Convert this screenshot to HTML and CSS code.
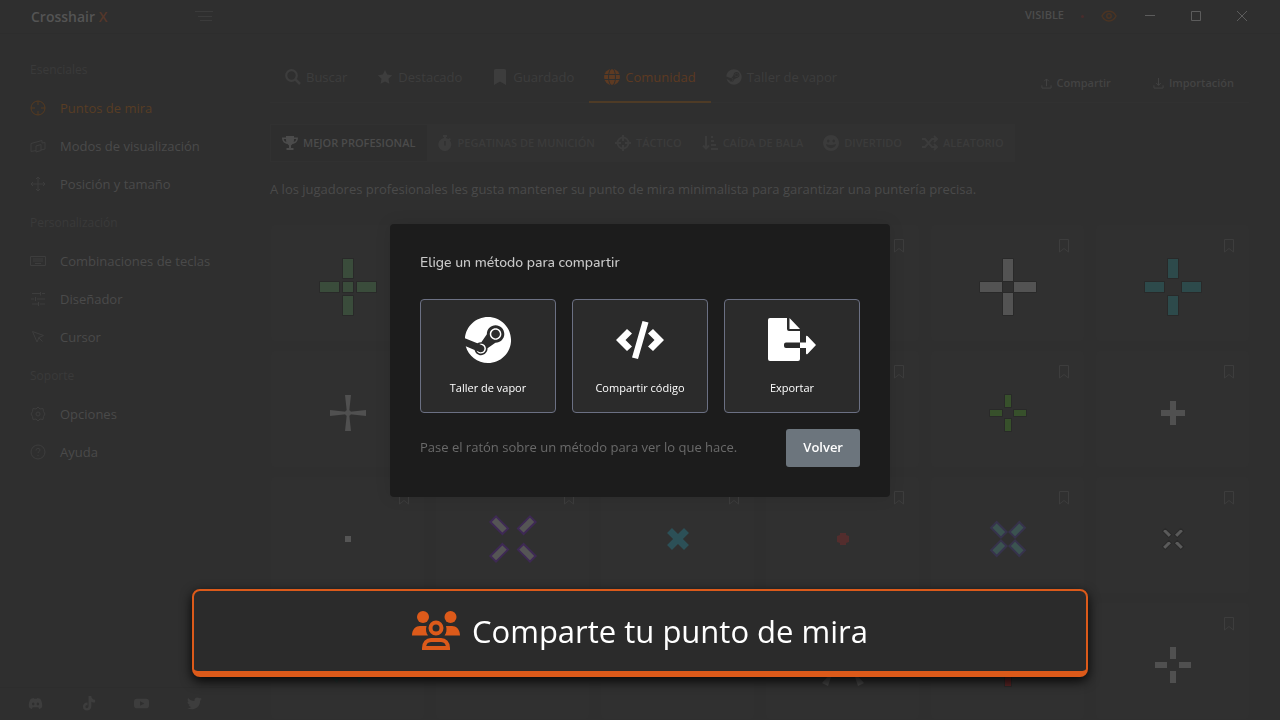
FILE: index.html
```html
<!DOCTYPE html>
<html lang="es">
<head>
    <meta charset="UTF-8">
    <meta name="viewport" content="width=device-width, initial-scale=1.0">
    <title>Crosshair X</title>
    <link rel="stylesheet" href="styles.css">
</head>
<body>
    <!-- shared icons -->
    <svg width="0" height="0" class="defs">
        <symbol id="i-bookmark" viewBox="0 0 10 14"><path d="M.5.5h9V13L5 9.5.5 13z" fill="none" stroke="currentColor"/></symbol>
        <symbol id="i-steam" viewBox="-10 -2 516 516"><path fill="currentColor" d="M496 256c0 137-111.2 248-248.4 248-113.8 0-209.6-76.3-239-180.4l95.2 39.3c6.4 32.1 34.9 56.4 68.9 56.4 39.2 0 71.9-32.4 70.2-73.5l84.5-60.2c52.1 1.3 95.8-40.9 95.8-93.5 0-51.6-42-93.5-93.7-93.5s-93.7 42-93.7 93.5v1.2L176.6 279c-15.5-.9-30.7 3.4-43.5 12.1L0 236.1C10.2 108.4 117.1 8 247.6 8 384.8 8 496 119 496 256zM155.7 384.3l-30.5-12.6a52.8 52.8 0 0 0 27.2 25.8c26.9 11.2 57.8-1.6 69-28.4 5.4-13 5.5-27.3.1-40.3-5.4-13-15.5-23.2-28.5-28.6-12.9-5.4-26.7-5.2-38.9-.6l31.5 13c19.8 8.2 29.2 30.9 20.9 50.7-8.3 19.9-31 29.2-50.8 21zm173.8-129.9c-34.4 0-62.4-28-62.4-62.3s28-62.3 62.4-62.3 62.4 28 62.4 62.3-27.9 62.3-62.4 62.3zm.1-15.6c25.9 0 46.9-21 46.9-46.8 0-25.9-21-46.8-46.9-46.8s-46.9 21-46.9 46.8c.1 25.8 21.1 46.8 46.9 46.8z"/></symbol>
    </svg>

    <div class="app">
        <header class="titlebar">
            <div class="logo">Crosshair <span>X</span></div>
            <button class="burger" aria-label="Menú">
                <svg width="18" height="11" viewBox="0 0 18 11" stroke="currentColor"><path d="M0 .5h18M3 5.5h14M5 9.5h12"/></svg>
            </button>
            <div class="window-tools">
                <span class="visible-label">VISIBLE</span>
                <span class="preview"></span>
                <button class="eye" aria-label="Mostrar">
                    <svg width="16" height="12" viewBox="0 0 16 12" fill="none" stroke="currentColor" stroke-width="1.5"><path d="M1 6c3-6.500 11-6.500 14 0-3 6.500-11 6.500-14 0z"/><circle cx="8" cy="6" r="2.2"/></svg>
                </button>
                <button class="win" aria-label="Minimizar"><svg width="10" height="10" stroke="currentColor"><path d="M0 4.500h10"/></svg></button>
                <button class="win" aria-label="Maximizar"><svg width="10" height="10" fill="none" stroke="currentColor"><path d="M.5.5h9v9h-9z"/></svg></button>
                <button class="win" aria-label="Cerrar"><svg width="10" height="10" stroke="currentColor"><path d="M0 0l10 10M10 0L0 10"/></svg></button>
            </div>
        </header>

        <aside class="sidebar">
            <nav>
                <h2>Esenciales</h2>
                <a href="#" class="active"><svg viewBox="0 0 16 16"><circle cx="8" cy="8" r="7"/><path d="M8 1v4M8 11v4M1 8h4M11 8h4"/></svg>Puntos de mira</a>
                <a href="#"><svg viewBox="0 0 16 16"><path d="M6 12.500l-5 1v-8l11-3V5M6 8l5-1.500v6L6 14zM12 5l3-.5V11l-4 1"/></svg>Modos de visualización</a>
                <a href="#"><svg viewBox="0 0 16 16"><path d="M8 1v14M1 8h14M6 3l2-2 2 2M6 13l2 2 2-2M3 6L1 8l2 2M13 6l2 2-2 2"/></svg>Posición y tamaño</a>
                <h2>Personalización</h2>
                <a href="#"><svg viewBox="0 0 16 16"><path d="M.5 3.500h15v9H.5zM3 6h10M3 8h10M5 10.500h6"/></svg>Combinaciones de teclas</a>
                <a href="#"><svg viewBox="0 0 16 16"><path d="M2 2.500h8M12 2.500h3M10.500 1v3.500M1 8h3M7 8h8M5.500 6v4M2 13h6M10 13h5M8.500 11v4"/></svg>Diseñador</a>
                <a href="#"><svg viewBox="0 0 16 16"><path d="M2.500 2.500l11 4-4.500 2-2 4.500zM8.500 8.500l4 4"/></svg>Cursor</a>
                <h2>Soporte</h2>
                <a href="#"><svg viewBox="0 0 16 16"><path d="M8 1l2 2 3-.5.500 3L15 8l-1.500 2.500-.5 3-3-.5-2 2-2-2-3 .5-.5-3L1 8l1.500-2.500.500-3L6 3z"/><circle cx="8" cy="8" r="2"/></svg>Opciones</a>
                <a href="#"><svg viewBox="0 0 16 16"><circle cx="8" cy="8" r="7"/><path d="M6 6.500c0-3 4-2.500 4-.5 0 1.500-2 1.500-2 3M8 11v1"/></svg>Ayuda</a>
            </nav>
            <footer class="social">
                <a href="#" aria-label="Discord"><svg viewBox="0 0 16 16"><path fill-rule="evenodd" d="M3 3l3-1 .5 1h3l.5-1 3 1c2 3 2.500 6 2 9l-3 2-1-2H5l-1 2-3-2c-.5-3 0-6 2-9zm2.500 4a1.300 1.500 0 1 0 .1 0zm5 0a1.300 1.500 0 1 0 .1 0z"/></svg></a>
                <a href="#" aria-label="TikTok"><svg viewBox="0 0 16 16"><path d="M8 0h3c0 2 1.500 4 4 4v3c-1.500 0-3-.5-4-1v5c0 6-9 6-9 .5C2 8.500 4.500 6.500 7 7v3c-1-.4-2.300 0-2.300 1.500C4.700 13.500 8 13.500 8 11z"/></svg></a>
                <a href="#" aria-label="YouTube"><svg viewBox="0 0 16 16"><path fill-rule="evenodd" d="M3 3h10q3 0 3 3v4q0 3-3 3H3q-3 0-3-3V6q0-3 3-3zm3.500 2.500v5L11 8z"/></svg></a>
                <a href="#" aria-label="Twitter"><svg viewBox="0 0 16 16"><path d="M16 3l-2 2c0 8-8 11-14 8 2 0 3.500-.5 4.500-1.400C3 11.500 2 10.500 1.600 9.300H3C1.500 8.800.5 7.500.5 6l1.500.4C.5 5.200.3 3.400 1.100 2 3 4 5 5 8 5.200 7.500 3 9 1.500 11 1.500c1 0 1.800.4 2.400 1L15.500 2l-1.300 1.700z"/></svg></a>
            </footer>
        </aside>

        <main class="content">
            <div class="topbar">
                <nav class="tabs">
                    <a href="#"><svg viewBox="0 0 16 16"><circle cx="6.500" cy="6.500" r="5.300" fill="none" stroke="currentColor" stroke-width="2.200"/><path d="M10 10l5 5" stroke="currentColor" stroke-width="2.500"/></svg>Buscar</a>
                    <a href="#"><svg viewBox="0 0 16 16"><path d="M8 1l2.200 4.600 5 .7-3.700 3.500.9 5L8 12.400l-4.400 2.400.9-5L.8 6.300l5-.7z"/></svg>Destacado</a>
                    <a href="#"><svg viewBox="0 0 16 16"><path d="M3.500 0h9q1.500 0 1.500 1.500V16l-6-3.500L2 16V1.500Q2 0 3.500 0z"/></svg>Guardado</a>
                    <a href="#" class="active"><svg viewBox="0 0 16 16"><circle cx="8" cy="8" r="8"/><g class="cut"><ellipse cx="8" cy="8" rx="3.500" ry="8.500"/><path d="M0 5.500h16M0 10.500h16"/></g></svg>Comunidad</a>
                    <a href="#"><svg><use href="#i-steam"/></svg>Taller de vapor</a>
                </nav>
                <div class="actions">
                    <button><svg viewBox="0 0 12 12"><path d="M1 8v3h10V8M6 9V1M3.500 3.500L6 1l2.500 2.500"/></svg>Compartir</button>
                    <button><svg viewBox="0 0 12 12"><path d="M1 8v3h10V8M6 0v8M3.500 5.500L6 8l2.500-2.500"/></svg>Importación</button>
                </div>
            </div>

            <div class="filters">
                <button class="active"><svg viewBox="0 0 16 16"><path fill-rule="evenodd" d="M4 1h8v1.500h4C16 6 14 8.500 10.500 9L9 10.500V13h2.500v2h-7v-2H7v-2.500L5.500 9C2 8.500 0 6 0 2.500h4zM1.700 4c.2 1.500 1.200 2.500 2.600 3C4 6 4 5 4 4zm12.600 0H12c0 1 0 2-.3 3 1.400-.5 2.400-1.500 2.600-3z"/></svg>MEJOR PROFESIONAL</button>
                <button><svg viewBox="0 0 16 16"><path fill-rule="evenodd" d="M6 0h4v2H9v1.100l2.500 1L12.800 3l1.200 1.200-1.100 1.300A6.500 6.500 0 1 1 7 3.100V2H6zm1.200 6v4.500h1.600V6z"/></svg>PEGATINAS DE MUNICIÓN</button>
                <button><svg viewBox="0 0 16 16" fill="none" stroke="currentColor" stroke-width="2"><circle cx="8" cy="8" r="5.500"/><path d="M8 0v6M8 10v6M0 8h6M10 8h6"/></svg>TÁCTICO</button>
                <button><svg viewBox="0 0 16 16" fill="none" stroke="currentColor" stroke-width="2"><path d="M4 1v12M1 10.500l3 3 3-3M9 2h2M9 6h3M9 10h5M9 14h7"/></svg>CAÍDA DE BALA</button>
                <button><svg viewBox="0 0 16 16"><path fill-rule="evenodd" d="M8 0a8 8 0 1 0 .01 0zM5.300 4.500a1.200 1.500 0 1 1-.1 0zm5.500 0a1.200 1.500 0 1 1-.1 0zM3 9c3 1.300 7 1.300 10 0-.5 5.500-9.500 5.500-10 0z"/></svg>DIVERTIDO</button>
                <button><svg viewBox="0 0 16 16" fill="none" stroke="currentColor" stroke-width="2"><path d="M0 4h3l7 8h5M0 12h3l7-8h5M12 1l3 3-3 3M12 9l3 3-3 3"/></svg>ALEATORIO</button>
            </div>

            <p class="description">A los jugadores profesionales les gusta mantener su punto de mira minimalista para garantizar una puntería precisa.</p>

            <div class="grid">
                <div class="card"><button aria-label="Guardar"><svg><use href="#i-bookmark"/></svg></button>
                    <svg class="cross" viewBox="-32 -32 64 64" fill="#3a4c3b" stroke="#292929"><path d="M-5.500-28.500h11v20h-11zM-5.500 8.500h11v20h-11zM-28.500-5.500h20v11h-20zM8.500-5.500h20v11h-20zM-5.500-5.500h11v11h-11z"/></svg></div>
                <div class="card"><button aria-label="Guardar"><svg><use href="#i-bookmark"/></svg></button></div>
                <div class="card"><button aria-label="Guardar"><svg><use href="#i-bookmark"/></svg></button></div>
                <div class="card"><button aria-label="Guardar"><svg><use href="#i-bookmark"/></svg></button></div>
                <div class="card"><button aria-label="Guardar"><svg><use href="#i-bookmark"/></svg></button>
                    <svg class="cross" viewBox="-32 -32 64 64" fill="#535353" stroke="#292929"><path d="M-5.500-28.500h11v23h-11zM-5.500 5.500h11v23h-11zM-28.500-5.500h23v11h-23zM5.500-5.500h23v11h-23z"/></svg></div>
                <div class="card"><button aria-label="Guardar"><svg><use href="#i-bookmark"/></svg></button>
                    <svg class="cross" viewBox="-32 -32 64 64" fill="#2d4a4b" stroke="#292929"><path d="M-5.500-28.500h11v20h-11zM-5.500 8.500h11v20h-11zM-28.500-5.500h20v11h-20zM8.500-5.500h20v11h-20z"/></svg></div>

                <div class="card"><button aria-label="Guardar"><svg><use href="#i-bookmark"/></svg></button>
                    <svg class="cross" viewBox="-32 -32 64 64" fill="#505050"><path d="M-3-18h6L1 0l2 18h-6L-1 0zM-18-3v6L0 1l18 2v-6L0-1z"/><circle r="3"/></svg></div>
                <div class="card"><button aria-label="Guardar"><svg><use href="#i-bookmark"/></svg></button></div>
                <div class="card"><button aria-label="Guardar"><svg><use href="#i-bookmark"/></svg></button></div>
                <div class="card"><button aria-label="Guardar"><svg><use href="#i-bookmark"/></svg></button></div>
                <div class="card"><button aria-label="Guardar"><svg><use href="#i-bookmark"/></svg></button>
                    <svg class="cross" viewBox="-32 -32 64 64" fill="#37502b" stroke="#292929"><path d="M-3.500-18.500h7v13h-7zM-3.500 5.500h7v13h-7zM-18.500-3.500h13v7h-13zM5.500-3.500h13v7h-13z"/></svg></div>
                <div class="card"><button aria-label="Guardar"><svg><use href="#i-bookmark"/></svg></button>
                    <svg class="cross" viewBox="-32 -32 64 64" fill="#505050"><path d="M-3-12h6v9h9v6H3v9h-6V3h-9v-6h9z"/></svg></div>

                <div class="card"><button aria-label="Guardar"><svg><use href="#i-bookmark"/></svg></button>
                    <svg class="cross" viewBox="-32 -32 64 64" fill="#555"><path d="M-3-3h6v6h-6z"/></svg></div>
                <div class="card"><button aria-label="Guardar"><svg><use href="#i-bookmark"/></svg></button>
                    <svg class="cross" viewBox="-32 -32 64 64" fill="#555" stroke="#3e2954" stroke-width="2"><path transform="rotate(45)" d="M-4-28h8v17h-8zM-4 11h8v17h-8zM-28-4h17v8h-17zM11-4h17v8H11z"/></svg></div>
                <div class="card"><button aria-label="Guardar"><svg><use href="#i-bookmark"/></svg></button>
                    <svg class="cross" viewBox="-32 -32 64 64" fill="#2c5057"><path transform="rotate(45)" d="M-3.500-12h7v8.500H12v7H3.500V12h-7V3.500H-12v-7h8.500z"/></svg></div>
                <div class="card"><button aria-label="Guardar"><svg><use href="#i-bookmark"/></svg></button>
                    <svg class="cross" viewBox="-32 -32 64 64" fill="#532d2d"><path d="M-3-6h6v2l3 1v6L3 4v2h-6V4l-3-1v-6l3-1z"/></svg></div>
                <div class="card"><button aria-label="Guardar"><svg><use href="#i-bookmark"/></svg></button>
                    <svg class="cross" viewBox="-32 -32 64 64" fill="#3b5350" stroke="#37334c" stroke-width="2"><path transform="rotate(45)" d="M-4-20h8v14h-8zM-4 6h8v14h-8zM-20-4h14v8h-14zM6-4h14v8H6z"/></svg></div>
                <div class="card"><button aria-label="Guardar"><svg><use href="#i-bookmark"/></svg></button>
                    <svg class="cross" viewBox="-32 -32 64 64" fill="#5a5a5a" stroke="#292929"><path transform="rotate(45)" d="M-2-13h4v9h-4zM-2 4h4v9h-4zM-13-2h9v4h-9zM4-2h9v4H4z"/></svg></div>

                <div class="card"><button aria-label="Guardar"><svg><use href="#i-bookmark"/></svg></button>
                    <svg class="cross" viewBox="-32 -32 64 64" fill="#263532"><path d="M-14 5l5 8-2 5-5-5zM14 5l-5 8 2 5 5-5z"/></svg></div>
                <div class="card"><button aria-label="Guardar"><svg><use href="#i-bookmark"/></svg></button></div>
                <div class="card"><button aria-label="Guardar"><svg><use href="#i-bookmark"/></svg></button></div>
                <div class="card"><button aria-label="Guardar"><svg><use href="#i-bookmark"/></svg></button>
                    <svg class="cross" viewBox="-32 -32 64 64" fill="#464646"><path d="M-12 8l-9 10 6 3 3-9zM12 8l9 10-6 3-3-9z"/></svg></div>
                <div class="card"><button aria-label="Guardar"><svg><use href="#i-bookmark"/></svg></button>
                    <svg class="cross" viewBox="-32 -32 64 64" fill="#572323" stroke="#292929"><path d="M-3.500 8.500h7v13h-7z"/></svg></div>
                <div class="card"><button aria-label="Guardar"><svg><use href="#i-bookmark"/></svg></button>
                    <svg class="cross" viewBox="-32 -32 64 64" fill="#505050"><path d="M-3-18h6v12h-6zM-3 6h6v12h-6zM-18-3h12v6h-12zM6-3h12v6H6z"/></svg></div>
            </div>
        </main>
    </div>

    <div class="overlay">
        <div class="modal" role="dialog" aria-labelledby="modal-title">
            <h1 id="modal-title">Elige un método para compartir</h1>
            <div class="methods">
                <button><svg><use href="#i-steam"/></svg>Taller de vapor</button>
                <button><svg viewBox="0 -5 48 48"><path d="M0 19L11 8l5 4.500L9.500 19l6.500 6.500-5 4.500zM48 19L37 8l-5 4.500 6.500 6.500-6.500 6.500 5 4.500zM26.500 0l6 1.500L22 38l-6-1.500z"/></svg>Compartir código</button>
                <button><svg viewBox="0 -2 48 48"><path d="M2 0h17v11q0 2 2 2h11v11.500H18q-2 0-2 2V28q0 2 2 2h14v11q0 2-2 2H2q-2 0-2-2V2q0-2 2-2zM21.500 0L32 11H21.500zM32 24.500h6V19q0-2 1.500-1L48 27l-8.500 9q-1.500 1-1.500-1v-5h-6z"/></svg>Exportar</button>
            </div>
            <div class="modal-footer">
                <p>Pase el ratón sobre un método para ver lo que hace.</p>
                <button>Volver</button>
            </div>
        </div>
    </div>

    <div class="banner">
        <svg viewBox="0 0 48 40"><circle cx="11" cy="6" r="6"/><circle cx="38.500" cy="6" r="6"/><path d="M0 24.500C0 18 4 15 8 15h6.500c-1 3.500-.5 7 1.500 9.500zM48 24.500C48 18 44 15 40 15h-6c1 3.500.500 7-1.500 9.500z"/><g fill="none" stroke="currentColor" stroke-width="4"><circle cx="24" cy="17" r="5.500"/><path d="M12 37c0-5 3-8 7-8h10c4 0 7 3 7 8z"/></g></svg>
        <span>Comparte tu punto de mira</span>
    </div>
</body>
</html>
```

FILE: styles.css
```css
* {
    box-sizing: border-box;
}
body {
    margin: 0;
    height: 100vh;
    overflow: hidden;
    font-family: "Open Sans", sans-serif;
    font-size: 13px;
    line-height: 18px;
    color: #4a4a4a;
    fill: currentColor;
    background-color: #2f2f2f;
}
h1, h2, p {
    margin: 0;
}
a {
    color: inherit;
    text-decoration: none;
}
button {
    padding: 0;
    border: none;
    background: none;
    color: inherit;
    font: inherit;
    cursor: pointer;
}
svg {
    display: block;
    flex: none;
}
.defs {
    position: absolute;
}
.app {
    display: grid;
    grid-template: 34px 1fr / 240px 1fr;
    height: 100vh;
}

/* title bar */
.titlebar {
    grid-column: 1 / 3;
    display: flex;
    align-items: center;
    padding: 0 15px 0 31px;
    border-bottom: 1px solid #2d2d2d;
}
.logo {
    width: 164px;
    font-size: 14px;
    font-weight: 600;
    color: #545454;
}
.logo span {
    color: #55372a;
}
.burger {
    color: #3b3b3b;
}
.window-tools {
    display: flex;
    align-items: center;
    align-self: flex-start;
    height: 32px;
    margin-left: auto;
    color: #5c5c5c;
}
.visible-label {
    padding-bottom: 2px;
    font-size: 11px;
    font-weight: 600;
    color: #4c4c4c;
}
.preview {
    width: 3px;
    height: 3px;
    margin: 0 17px;
    border-radius: 2px;
    background-color: #492c2c;
}
.eye {
    margin-right: 10px;
    color: #4b3423;
}
.win {
    display: flex;
    align-items: center;
    justify-content: center;
    width: 46px;
    height: 32px;
}

/* sidebar */
.sidebar {
    display: flex;
    flex-direction: column;
    padding-top: 17px;
    white-space: nowrap;
}
.sidebar h2 {
    padding: 10px 30px;
    font-size: 12px;
    font-weight: 400;
    color: #3a3a3a;
}
.sidebar nav a {
    display: flex;
    align-items: center;
    gap: 14px;
    height: 38px;
    padding: 0 30px;
}
.sidebar nav a + h2 {
    margin-top: 1px;
}
.sidebar nav a.active {
    color: #583d24;
}
.sidebar nav svg {
    width: 16px;
    height: 16px;
    fill: none;
    stroke: #3d3d3d;
}
.sidebar nav .active svg {
    stroke: #553a20;
}
.social {
    display: flex;
    gap: 38px;
    margin-top: auto;
    padding: 8px 28px 9px;
    border-top: 1px solid #2d2d2d;
    color: #3d3d3d;
}
.social svg {
    width: 15px;
    height: 15px;
}

/* main area */
.content {
    padding: 19px 31px 0 30px;
    overflow: hidden;
}
.topbar {
    display: flex;
    justify-content: space-between;
    border-bottom: 1px solid #313131;
}
.tabs {
    display: flex;
    color: #3d3d3d;
}
.tabs a {
    display: flex;
    align-items: center;
    gap: 5px;
    height: 50px;
    margin-bottom: -1px;
    padding: 0 15px;
    border-bottom: 2px solid transparent;
}
.tabs a.active {
    color: #5d3a22;
    border-color: #4e3b26;
}
.tabs svg,
.filters svg {
    width: 16px;
    height: 16px;
}
.cut {
    fill: none;
    stroke: #2f2f2f;
}
.actions {
    display: flex;
    gap: 12px;
    padding-top: 11px;
}
.actions button {
    display: flex;
    align-items: center;
    gap: 5px;
    height: 38px;
    padding: 0 15px;
    font-size: 11px;
    font-weight: 600;
    color: #434343;
}
.actions svg {
    width: 11px;
    height: 11px;
    fill: none;
    stroke: currentColor;
}
.filters {
    display: flex;
    width: fit-content;
    margin-top: 21px;
    border: 1px solid #313131;
    background-color: #313131;
}
.filters button {
    display: flex;
    align-items: center;
    gap: 5px;
    height: 36px;
    padding: 0 10px;
    font-size: 11px;
    font-weight: 600;
    color: #3b3b3b;
}
.filters button.active {
    padding: 0 11px;
    color: #4b4b4b;
    background-color: #2e2e2e;
}
.description {
    margin: 18px 0 27px;
}
.grid {
    display: grid;
    grid-template-columns: repeat(6, 1fr);
    gap: 10px 12px;
    padding-left: 1px;
}
.card {
    position: relative;
    display: flex;
    justify-content: center;
    height: 116px;
    padding-top: 30px;
    border-radius: 4px;
    background-color: #303030;
}
.card button {
    position: absolute;
    top: 14px;
    right: 15px;
    color: #3d3d3d;
}
.card button svg {
    width: 10px;
    height: 14px;
}
.cross {
    width: 64px;
    height: 64px;
}

/* share dialog */
.overlay {
    position: fixed;
    inset: 0;
    display: flex;
    align-items: center;
    justify-content: center;
    padding-top: 1px;
}
.modal {
    width: 500px;
    padding: 30px;
    border-radius: 4px;
    background-color: #1c1c1c;
    box-shadow: 0 0 16px rgba(0, 0, 0, 0.1);
}
.modal h1 {
    margin-bottom: 27px;
    font-family: Nunito, "Open Sans", sans-serif;
    font-size: 14px;
    font-weight: 500;
    color: #c9c9c9;
}
.methods {
    display: grid;
    grid-template-columns: repeat(3, 1fr);
    gap: 16px;
}
.methods button {
    display: flex;
    flex-direction: column;
    align-items: center;
    gap: 15px;
    height: 114px;
    padding-top: 16px;
    border: 1px solid #6b7083;
    border-radius: 4px;
    background-color: #2b2b2b;
    font-size: 11px;
    font-weight: 500;
    color: #fff;
}
.methods svg {
    width: 48px;
    height: 48px;
}
.modal-footer {
    display: flex;
    align-items: center;
    justify-content: space-between;
    margin-top: 16px;
    color: #6a6a6a;
}
.modal-footer p {
    padding-bottom: 2px;
}
.modal-footer button {
    height: 38px;
    padding: 0 17px 2px;
    border-radius: 3px;
    background-color: #6c757d;
    font-weight: 600;
    color: #fff;
}

/* bottom banner */
.banner {
    position: fixed;
    right: 15%;
    bottom: 43px;
    left: 15%;
    display: flex;
    align-items: center;
    justify-content: center;
    gap: 12px;
    height: 88px;
    border: 2px solid #dc5a1a;
    border-bottom-width: 6px;
    border-radius: 8px;
    background-color: #2b2b2b;
    box-shadow: 0 4px 12px rgba(0, 0, 0, 0.9);
    font-size: 31px;
    line-height: 44px;
    color: #fff;
}
.banner svg {
    width: 48px;
    height: 40px;
    color: #dc5a1a;
}
```
